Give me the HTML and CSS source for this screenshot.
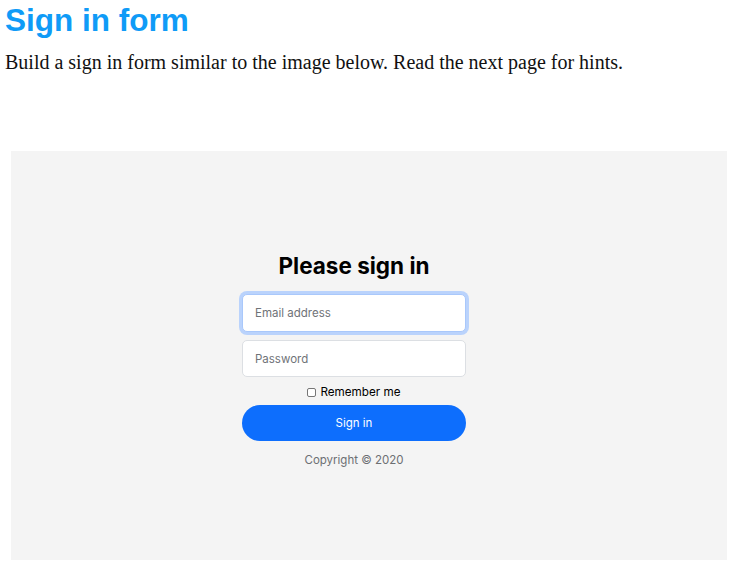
FILE: index.html
```html
<!DOCTYPE html>
<html>
<head>
<meta charset="utf-8">
<link rel="stylesheet" href="styles.css">
</head>
<body>
<h1 class="title">Sign in form</h1>
<p class="intro">Build a sign in form similar to the image below. Read the next page for hints.</p>
<div class="panel">
  <form class="signin">
    <h2 class="signin-title">Please sign in</h2>
    <input class="field field-focus" type="text" placeholder="Email address">
    <input class="field" type="password" placeholder="Password">
    <label class="remember"><span class="box"></span>Remember me</label>
    <button class="btn" type="button">Sign in</button>
    <p class="copy">Copyright © 2020</p>
  </form>
</div>
</body>
</html>
```
FILE: styles.css
```css
html, body { margin: 0; padding: 0; background: #fff; }
body { font-family: "Liberation Sans", Arial, sans-serif; }
.title {
  margin: 0;
  padding: 3px 0 0 5px;
  font: bold 31.5px/34px "Liberation Sans", Arial, sans-serif;
  color: #0f9bf7;
}
.intro {
  margin: 13px 0 0 5px;
  font: 20px/24px "Liberation Serif", "Times New Roman", serif;
  color: #111;
}
.panel {
  margin: 77px 9px 0 11px;
  height: 409px;
  box-sizing: border-box;
  background: #f4f4f4;
  padding: 102px 0 0 231px;
}
.signin {
  width: 224px;
  display: flex;
  flex-direction: column;
  font-family: Inter, "Liberation Sans", sans-serif;
}
.signin-title {
  margin: 0 0 15px;
  font: bold 22.5px/26px Inter, "Liberation Sans", sans-serif;
  text-align: center;
  color: #000;
}
.field {
  box-sizing: border-box;
  width: 224px;
  height: 38px;
  border: 1px solid #dcdfe3;
  border-radius: 5px;
  background: #fff;
  padding: 0 12px;
  font: 11.5px Inter, "Liberation Sans", sans-serif;
  outline: none;
  margin: 0;
}
.field::placeholder { color: #6f7378; }
.field-focus {
  border-color: #a9c8fb;
  box-shadow: 0 0 0 3px #bad3fc;
}
.field + .field { margin-top: 8px; height: 37px; }
.remember {
  display: flex;
  align-items: center;
  justify-content: center;
  margin-top: 7px;
  height: 15px;
  font: 11.7px Inter, "Liberation Sans", sans-serif;
  color: #000;
}
.box {
  width: 7px;
  height: 7px;
  border: 1px solid #767676;
  border-radius: 2px;
  background: #fff;
  margin: 1px 4px 0 0;
}
.btn {
  margin-top: 6px;
  height: 36px;
  width: 224px;
  border: none;
  border-radius: 18px;
  background: #0d6efd;
  color: #fff;
  font: 11.5px Inter, "Liberation Sans", sans-serif;
  padding: 0;
}
.copy {
  margin: 12px 0 0;
  text-align: center;
  font: 11.5px/14px Inter, "Liberation Sans", sans-serif;
  color: #6c6f73;
}
```
